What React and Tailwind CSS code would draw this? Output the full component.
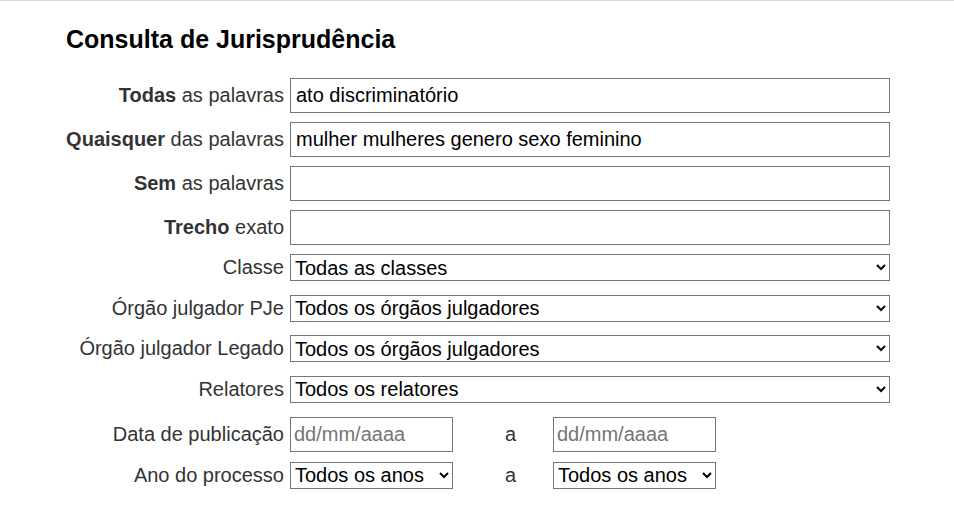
import { useState } from "react";

const textFields = [
  { name: "todas", bold: "Todas", rest: " as palavras", value: "ato discriminatório" },
  { name: "quaisquer", bold: "Quaisquer", rest: " das palavras", value: "mulher mulheres genero sexo feminino" },
  { name: "sem", bold: "Sem", rest: " as palavras", value: "" },
  { name: "trecho", bold: "Trecho", rest: " exato", value: "" },
];

const selectFields = [
  { name: "classe", label: "Classe", option: "Todas as classes" },
  { name: "orgaoPje", label: "Órgão julgador PJe", option: "Todos os órgãos julgadores" },
  { name: "orgaoLegado", label: "Órgão julgador Legado", option: "Todos os órgãos julgadores" },
  { name: "relatores", label: "Relatores", option: "Todos os relatores" },
];

const inputCls =
  "h-[35px] w-[600px] border border-[#767676] bg-white px-[5px] text-[20px] leading-[23px] text-black outline-none";
const selectCls =
  "h-[27px] w-[600px] border border-[#767676] bg-white text-[20px] leading-[23px] text-black";
const dateCls =
  "h-[35px] w-[163px] border border-[#767676] bg-white px-[3px] text-[20px] leading-[23px] text-black outline-none placeholder:text-[#757575]";
const yearCls =
  "h-[27px] w-[163px] border border-[#767676] bg-white text-[20px] leading-[23px] text-black";

function Label({ children }) {
  return (
    <label className="w-[224px] shrink-0 pr-[6px] text-right text-[20px] leading-[23px] text-[#333] whitespace-nowrap">
      {children}
    </label>
  );
}

function App() {
  const [values, setValues] = useState(
    Object.fromEntries(textFields.map((f) => [f.name, f.value]))
  );

  const handleChange = (e) => {
    setValues({ ...values, [e.target.name]: e.target.value });
  };

  return (
    <div className="min-h-screen border-t border-[#dcdcdc] bg-white font-['Liberation_Sans',Arial,sans-serif]">
      <div className="pl-[66px] pt-[22px]">
        <h2 className="mb-[22px] text-[25px] font-bold leading-[33px] text-black">
          Consulta de Jurisprudência
        </h2>

        <form className="flex flex-col">
          {textFields.map((f) => (
            <div key={f.name} className="mb-[9px] flex items-center">
              <Label>
                <b>{f.bold}</b>
                {f.rest}
              </Label>
              <input
                name={f.name}
                type="text"
                value={values[f.name]}
                onChange={handleChange}
                className={inputCls}
              />
            </div>
          ))}

          {selectFields.map((f) => (
            <div key={f.name} className="mb-[13.67px] flex items-center">
              <Label>{f.label}</Label>
              <select name={f.name} className={selectCls}>
                <option>{f.option}</option>
              </select>
            </div>
          ))}

          <div className="mb-[10px] flex items-center">
            <Label>Data de publicação</Label>
            <input type="text" placeholder="dd/mm/aaaa" className={dateCls} />
            <span className="w-[100px] pl-[52px] text-[20px] leading-[23px] text-[#333]">a</span>
            <input type="text" placeholder="dd/mm/aaaa" className={dateCls} />
          </div>

          <div className="flex items-center">
            <Label>Ano do processo</Label>
            <select className={yearCls}>
              <option>Todos os anos</option>
            </select>
            <span className="w-[100px] pl-[52px] text-[20px] leading-[23px] text-[#333]">a</span>
            <select className={yearCls}>
              <option>Todos os anos</option>
            </select>
          </div>
        </form>
      </div>
    </div>
  );
}

export default App;
